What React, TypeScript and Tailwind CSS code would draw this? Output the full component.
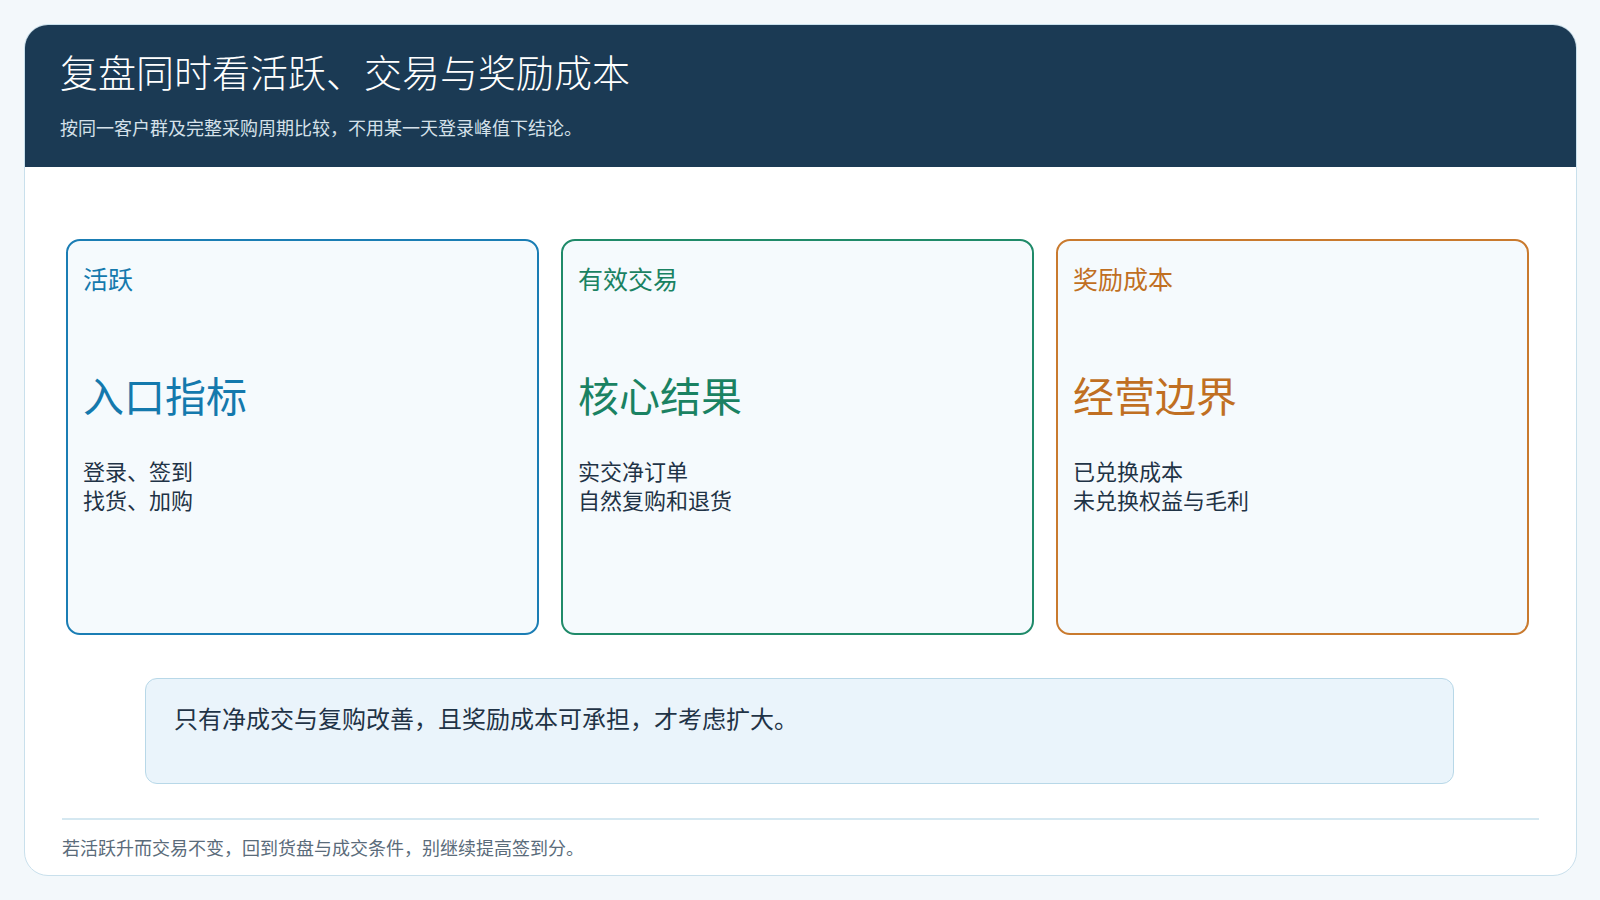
const font = { fontFamily: '"Noto Sans CJK SC", "Noto Sans", sans-serif' };

const cards = [
  { tag: "活跃", title: "入口指标", lines: ["登录、签到", "找货、加购"], color: "text-[#1479ad]", border: "border-[#1a7db4]" },
  { tag: "有效交易", title: "核心结果", lines: ["实交净订单", "自然复购和退货"], color: "text-[#1a8262]", border: "border-[#1f8a69]" },
  { tag: "奖励成本", title: "经营边界", lines: ["已兑换成本", "未兑换权益与毛利"], color: "text-[#c06f22]", border: "border-[#c97a2e]" },
];

export default function App() {
  return (
    <div className="h-[900px] w-[1600px] bg-[#f3f8fb] pt-[24px] pl-[24px]" style={font}>
      <div className="flex h-[852px] w-[1553px] flex-col overflow-hidden rounded-[24px] border border-[#c9e0ec] bg-white">
        <div className="h-[142px] shrink-0 bg-[#1b3a54] pl-[35px] pt-[20px] text-white">
          <h1 className="text-[38px] font-light leading-[52px] text-white">复盘同时看活跃、交易与奖励成本</h1>
          <p className="mt-[16px] text-[18px] leading-[28px] text-[#d5e1ea]">按同一客户群及完整采购周期比较，不用某一天登录峰值下结论。</p>
        </div>
        <div className="flex gap-[22px] pl-[41px] pt-[72px]">
          {cards.map((c) => (
            <div key={c.tag} className={`h-[396px] w-[473px] rounded-[14px] border-2 bg-[#f5fafd] px-[15px] pt-[20px] ${c.border}`}>
              <div className={`text-[25px] leading-[34px] ${c.color}`}>{c.tag}</div>
              <div className={`mt-[71px] text-[41px] leading-[56px] ${c.color}`}>{c.title}</div>
              <div className="mt-[34px] text-[22px] leading-[29px] text-[#1f3346]">
                {c.lines.map((l) => (
                  <div key={l}>{l}</div>
                ))}
              </div>
            </div>
          ))}
        </div>
        <div className="ml-[120px] mt-[43px] h-[106px] w-[1309px] shrink-0 rounded-[12px] border border-[#b8d8e8] bg-[#eaf4fb] pl-[28px] pt-[22px] text-[24px] leading-[34px] text-[#1f3346]">
          只有净成交与复购改善，且奖励成本可承担，才考虑扩大。
        </div>
        <div className="mx-[37px] mt-[34px] border-t-2 border-[#d5e8f1]" />
        <p className="ml-[37px] mt-[14px] text-[18px] leading-[27px] text-[#5a6b7a]">若活跃升而交易不变，回到货盘与成交条件，别继续提高签到分。</p>
      </div>
    </div>
  );
}
